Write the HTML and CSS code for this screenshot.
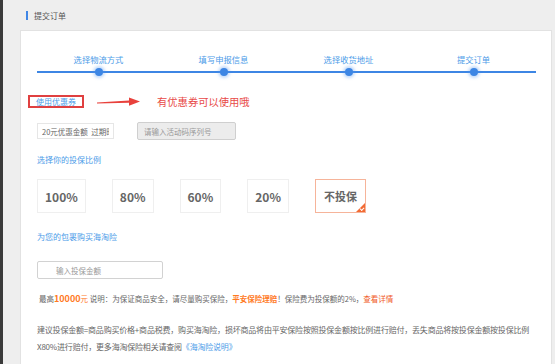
FILE: index.html
```html
<!DOCTYPE html>
<html lang="zh-CN">
<head>
    <meta charset="UTF-8">
    <title>提交订单</title>
    <link rel="stylesheet" href="styles.css">
</head>
<body>
    <div class="page">
        <div class="page-head">
            <span class="head-bar"></span>
            <span class="head-title">提交订单</span>
        </div>

        <div class="card">
            <div class="steps">
                <div class="step-labels">
                    <span>选择物流方式</span>
                    <span>填写申报信息</span>
                    <span>选择收货地址</span>
                    <span>提交订单</span>
                </div>
                <div class="track">
                    <span class="dot"></span>
                    <span class="dot"></span>
                    <span class="dot"></span>
                    <span class="dot"></span>
                </div>
            </div>

            <div class="coupon-row">
                <span class="coupon-btn">使用优惠券</span>
                <svg class="arrow" width="44" height="10" viewBox="0 0 44 10">
                    <polygon points="0,5.6 32,3.6 32,0.5 43,4.6 32,8.8 32,5.8 0,6.4" fill="#e8413c"/>
                </svg>
                <span class="coupon-note">有优惠券可以使用哦</span>
            </div>

            <div class="coupon-inputs">
                <input class="coupon-select" type="text" value="20元优惠金额  过期时间2016-08-01" readonly>
                <input class="coupon-code" type="text" placeholder="请输入活动码序列号">
            </div>

            <div class="section-title">选择你的投保比例</div>
            <div class="ratios">
                <span class="ratio">100%</span>
                <span class="ratio">80%</span>
                <span class="ratio">60%</span>
                <span class="ratio">20%</span>
                <span class="ratio ratio-none active">不投保</span>
            </div>

            <div class="section-title insure-title">为您的包裹购买海淘险</div>
            <input class="amount" type="text" placeholder="输入投保金额">

            <p class="note">最高<b class="orange">10000</b><span class="orange-plain">元</span> 说明：为保证商品安全，请尽量购买保险，<b class="orange-bold">平安保险理赔</b>！保险费为投保额的2%，<span class="red-link">查看详情</span></p>

            <p class="desc">建议投保金额=商品购买价格+商品税费，购买海淘险，损坏商品将由平安保险按照投保金额按比例进行赔付，丢失商品将按投保金额按投保比例<br>X80%进行赔付，更多海淘保险相关请查阅<span class="blue-link">《海淘险说明》</span></p>
        </div>
    </div>
</body>
</html>
```

FILE: styles.css
```css
* {
    box-sizing: border-box;
}
body {
    margin: 0;
    background: #fff;
    font-family: "Noto Sans CJK SC", "Noto Sans", sans-serif;
    color: #666;
}
.page {
    width: 555px;
    height: 364px;
    overflow: hidden;
    background: #eeeeee;
    border-left: 3px solid #3a3a3a;
}
.page-head {
    height: 30px;
    display: flex;
    align-items: center;
    padding-left: 23px;
}
.head-bar {
    width: 2px;
    height: 9px;
    background: #3f86e6;
    margin-right: 6px;
}
.head-title {
    font-size: 8px;
    color: #555;
}
.card {
    margin-left: 17px;
    width: 532px;
    height: 340px;
    background: #fff;
    border: 1px solid #e2e2e2;
    border-bottom: none;
    padding: 0 0 0 16px;
}

/* steps */
.steps {
    width: 500px;
    margin-left: -1px;
    padding-top: 22px;
}
.step-labels, .track {
    display: grid;
    grid-template-columns: repeat(4, 125px);
    justify-items: center;
}
.step-labels span {
    font-size: 8.3px;
    line-height: 12px;
    color: #4b9be8;
}
.track {
    position: relative;
    margin-top: 3px;
    height: 8px;
    align-items: center;
}
.track::before {
    content: "";
    position: absolute;
    left: 1px;
    right: 0;
    top: 3px;
    height: 2px;
    background: #3d86e4;
}
.dot {
    position: relative;
    width: 8px;
    height: 8px;
    border-radius: 50%;
    background: #3d86e4;
    box-shadow: 0 0 3px 2px rgba(80, 150, 240, 0.35);
}

/* coupon */
.coupon-row {
    display: flex;
    align-items: center;
    margin: 18px 0 0 -9px;
}
.coupon-btn {
    border: 2px solid #e04040;
    padding: 0 6px;
    font-size: 8px;
    line-height: 9px;
    color: #4b9be8;
}
.arrow {
    margin-left: 13px;
}
.coupon-note {
    margin-left: 16px;
    font-size: 10.3px;
    color: #e84a48;
}
.coupon-inputs {
    display: flex;
    align-items: center;
    gap: 23px;
    margin-top: 13px;
}
.coupon-inputs input, .amount {
    font-family: inherit;
    font-size: 7.5px;
    outline: none;
    margin: 0;
}
.coupon-select {
    width: 77px;
    height: 16px;
    padding: 0 4px;
    border: 1px solid #e6e6e6;
    color: #666;
    background: #fff;
}
.coupon-code {
    width: 99px;
    height: 18px;
    padding: 0 6px;
    border: 1px solid #cfcfcf;
    border-radius: 2px;
    background: #ececec;
}
.coupon-code::placeholder, .amount::placeholder {
    color: #999;
}

/* ratio */
.section-title {
    margin-top: 14px;
    font-size: 8px;
    line-height: 12px;
    color: #4b9be8;
}
.ratios {
    display: flex;
    gap: 26px;
    margin-top: 13px;
}
.ratio {
    position: relative;
    height: 34px;
    padding: 0 7px;
    display: flex;
    align-items: center;
    border: 1px solid #efefef;
    font-size: 12px;
    font-weight: bold;
    color: #666;
}
.ratio-none {
    font-size: 11px;
    padding: 0 8px;
}
.ratio.active {
    border-color: #f6b49a;
}
.ratio.active::after {
    content: "";
    position: absolute;
    right: 0;
    bottom: 0;
    border-style: solid;
    border-width: 0 0 9px 9px;
    border-color: transparent transparent #f26b34 transparent;
}
.ratio.active::before {
    content: "";
    position: absolute;
    right: 1px;
    bottom: 2px;
    width: 3px;
    height: 2px;
    border-left: 1px solid #fff;
    border-bottom: 1px solid #fff;
    transform: rotate(-45deg);
    z-index: 1;
}
.insure-title {
    margin-top: 18px;
}
.amount {
    display: block;
    width: 126px;
    height: 18px;
    margin-top: 18px;
    padding: 0 18px;
    border: 1px solid #d2d2d2;
    border-radius: 2px;
}

/* text */
.note {
    margin: 14px 0 0 2px;
    font-size: 7.5px;
    line-height: 12px;
    color: #666;
}
.orange {
    color: #ff7a1f;
    font-size: 9px;
}
.orange-bold {
    color: #ff7a1f;
}
.orange-plain {
    color: #ff7a1f;
}
.red-link {
    color: #f05a28;
}
.desc {
    margin: 16px 0 0 0;
    font-size: 8px;
    letter-spacing: -0.2px;
    line-height: 17px;
    white-space: nowrap;
    color: #666;
}
.blue-link {
    color: #4b9be8;
}
```
